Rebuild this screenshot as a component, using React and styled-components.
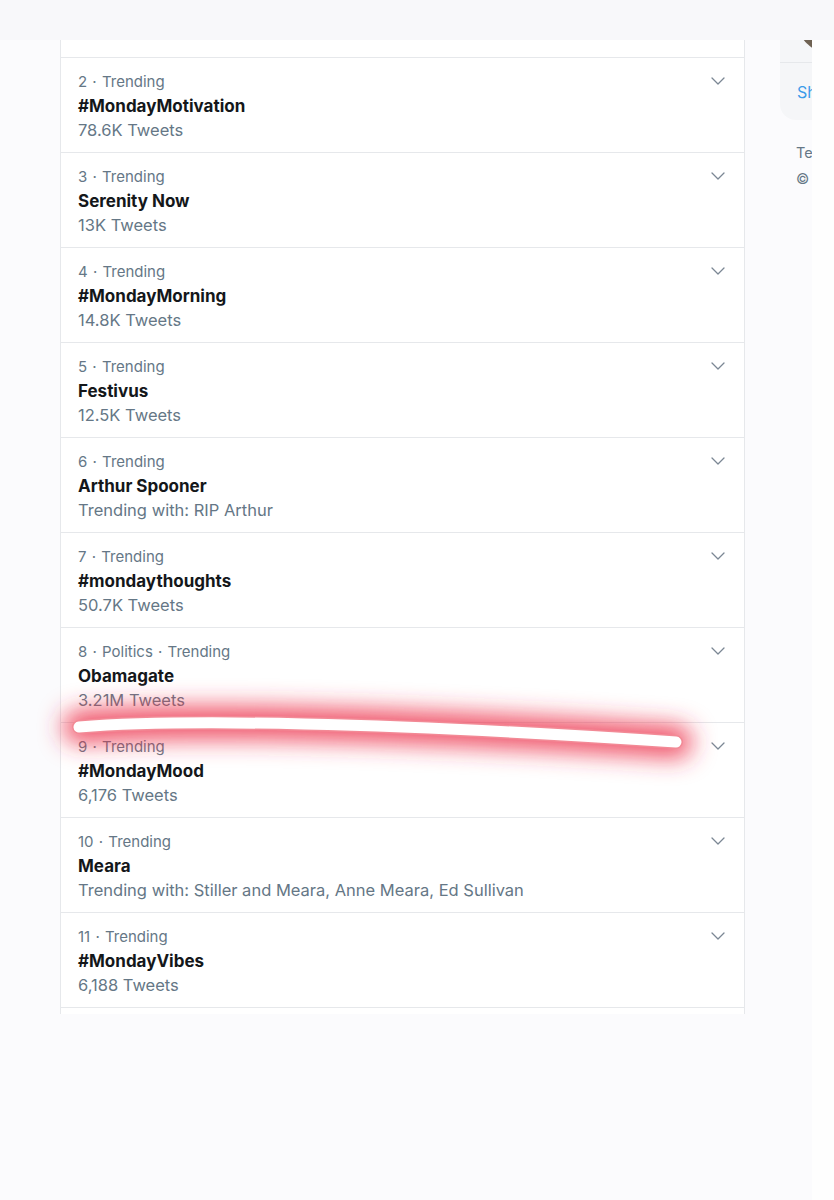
import React from "react";
import styled, { createGlobalStyle } from "styled-components";

const Global = createGlobalStyle`
  html, body { margin: 0; padding: 0; background: #fbfbfd; }
  body { font-family: Inter, "Noto Sans", "Liberation Sans", sans-serif; -webkit-font-smoothing: antialiased; }
`;

const Page = styled.div`
  position: relative;
  width: 834px;
  height: 1200px;
  overflow: hidden;
  background: #fbfbfd;
  display: flex;
  flex-direction: column;
`;

const TopBand = styled.div`
  height: 40px;
  flex: none;
  background: #f8f8fa;
`;

const Main = styled.div`
  display: flex;
  align-items: flex-start;
  flex: 1;
`;

const Gutter = styled.div`
  width: 60px;
  flex: none;
`;

const Panel = styled.section`
  width: 683px;
  flex: none;
  background: #fff;
  border-left: 1px solid #e6e8eb;
  border-right: 1px solid #e6e8eb;
  display: flex;
  flex-direction: column;
`;

const Stub = styled.div`
  height: ${(p) => p.$h}px;
  border-bottom: ${(p) => (p.$last ? "none" : "1px solid #e6e8eb")};
`;

const Row = styled.div`
  height: 95px;
  box-sizing: border-box;
  padding: 12px 18px 0 17px;
  border-bottom: 1px solid #e6e8eb;
  display: flex;
  justify-content: space-between;
  align-items: flex-start;
`;

const Texts = styled.div`
  display: flex;
  flex-direction: column;
`;

const Category = styled.div`
  font-size: 15px;
  line-height: 24px;
  color: #657786;
  word-spacing: 1px;
`;

const Title = styled.div`
  font-size: 17px;
  line-height: 24px;
  font-weight: 700;
  color: #14171a;
`;

const Meta = styled.div`
  font-size: 16.5px;
  line-height: 24px;
  color: #657786;
`;

const Chevron = styled.svg`
  width: 16px;
  height: 16px;
  margin-top: 3px;
  flex: none;
`;

const SideGap = styled.div`
  width: 35px;
  flex: none;
`;

const Sidebar = styled.aside`
  width: 32px;
  flex: none;
  overflow: hidden;
  display: flex;
  flex-direction: column;
`;

const SideInner = styled.div`
  width: 300px;
  display: flex;
  flex-direction: column;
`;

const Card = styled.div`
  background: #f5f6f8;
  border-radius: 0 0 16px 16px;
  display: flex;
  flex-direction: column;
`;

const CardTop = styled.div`
  position: relative;
  overflow: hidden;
  height: 22px;
  border-bottom: 1px solid #e6e8eb;
`;

const Avatar = styled.div`
  position: absolute;
  left: 17px;
  top: -53px;
  width: 66px;
  height: 66px;
  border-radius: 50%;
  background: #6f6253;
`;

const ShowMore = styled.div`
  height: 57px;
  padding-left: 17px;
  display: flex;
  align-items: center;
  font-size: 16px;
  color: #3d9be9;
`;

const Footer = styled.div`
  padding: 20px 0 0 16px;
  font-size: 14.5px;
  line-height: 26px;
  color: #657786;
`;

const Strip = styled.div`
  flex: 1;
  align-self: stretch;
  background: #fefefe;
`;

const Scribble = styled.svg`
  position: absolute;
  left: 0;
  top: 0;
  width: 834px;
  height: 1200px;
  pointer-events: none;
`;

const trends = [
  ["2 · Trending", "#MondayMotivation", "78.6K Tweets"],
  ["3 · Trending", "Serenity Now", "13K Tweets"],
  ["4 · Trending", "#MondayMorning", "14.8K Tweets"],
  ["5 · Trending", "Festivus", "12.5K Tweets"],
  ["6 · Trending", "Arthur Spooner", "Trending with: RIP Arthur"],
  ["7 · Trending", "#mondaythoughts", "50.7K Tweets"],
  ["8 · Politics · Trending", "Obamagate", "3.21M Tweets"],
  ["9 · Trending", "#MondayMood", "6,176 Tweets"],
  ["10 · Trending", "Meara", "Trending with: Stiller and Meara, Anne Meara, Ed Sullivan"],
  ["11 · Trending", "#MondayVibes", "6,188 Tweets"],
];

const Caret = () => (
  <Chevron viewBox="0 0 16 16">
    <path d="M2 5 L8 11 L14 5" fill="none" stroke="#7b8794" strokeWidth="1.3" strokeLinecap="round" strokeLinejoin="round" />
  </Chevron>
);

const STROKE = "M79 727 C 180 719, 380 722, 676 742";

export default function App() {
  return (
    <Page>
      <Global />
      <TopBand />
      <Main>
        <Gutter />
        <Panel>
          <Stub $h={17} />
          {trends.map(([c, t, m]) => (
            <Row key={t}>
              <Texts>
                <Category>{c}</Category>
                <Title>{t}</Title>
                <Meta>{m}</Meta>
              </Texts>
              <Caret />
            </Row>
          ))}
          <Stub $h={6} $last />
        </Panel>
        <SideGap />
        <Sidebar>
          <SideInner>
            <Card>
              <CardTop>
                <Avatar />
              </CardTop>
              <ShowMore>Show more</ShowMore>
            </Card>
            <Footer>
              <div>Terms</div>
              <div>© 2020 Twitter, Inc.</div>
            </Footer>
          </SideInner>
        </Sidebar>
        <Strip />
      </Main>
      <Scribble viewBox="0 0 834 1200">
        <defs>
          <filter id="glow" x="-20%" y="-400%" width="140%" height="900%">
            <feGaussianBlur stdDeviation="12" />
          </filter>
        </defs>
        <path d={STROKE} fill="none" stroke="#ec2f48" strokeOpacity="0.85" strokeWidth="32" strokeLinecap="round" filter="url(#glow)" />
        <path d={STROKE} fill="none" stroke="#f28a96" strokeWidth="14" strokeLinecap="round" />
        <path d={STROKE} fill="none" stroke="#ffffff" strokeWidth="11" strokeLinecap="round" />
      </Scribble>
    </Page>
  );
}
